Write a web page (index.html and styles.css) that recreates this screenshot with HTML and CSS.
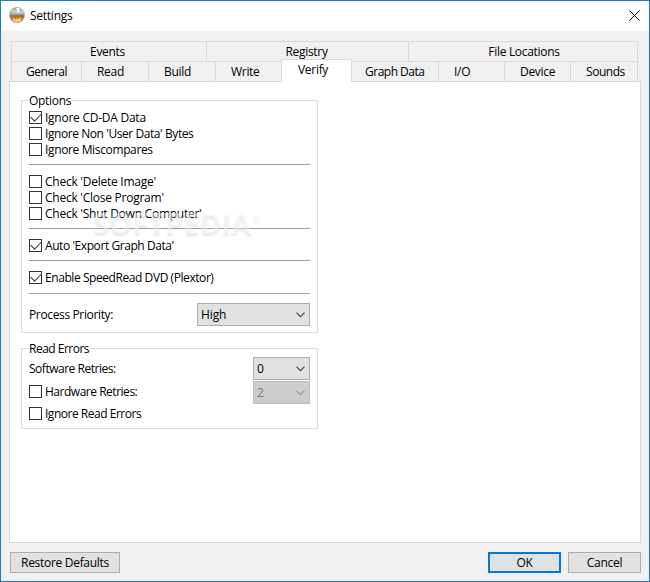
FILE: index.html
```html
<!DOCTYPE html>
<html lang="en">
<head>
<meta charset="utf-8">
<title>Settings</title>
<link rel="stylesheet" href="styles.css">
</head>
<body>
<div class="window">
  <header class="titlebar">
    <svg class="app-icon" width="16" height="16" viewBox="0 0 16 16">
      <defs>
        <linearGradient id="disc" x1="0" y1="0" x2="0" y2="1">
          <stop offset="0" stop-color="#98989c"/><stop offset=".3" stop-color="#d4d4d6"/><stop offset=".52" stop-color="#8f8986"/><stop offset=".72" stop-color="#a9764a"/><stop offset="1" stop-color="#e0a050"/>
        </linearGradient>
      </defs>
      <circle cx="8" cy="8" r="7.7" fill="url(#disc)" stroke="#b9aeaa" stroke-width=".5"/>
      <path d="M7 1h4L9 7z" fill="#f4f4f5"/>
      <path d="M1 8l3 1 3-1 2 1 3-1 3 1v1l-2 1-2-2-2 2-2-2-2 2-2-2-1 1z" fill="#77706d"/>
      <path d="M1.500 11l1-1 1 1 1-2 1 3 2-2 1 1 2-2 1 2 1-1 1 1 1-1c-1 3-4 5-6 5s-5-1-6-4z" fill="#e58a1a"/>
      <path d="M4 13l1-2 1 2 2-1 1 1 2-2 1 2c-2 2-6 2-8 0z" fill="#ffdf7a"/>
      <path d="M1 4h2v2H1z" fill="#8be02c"/>
    </svg>
    <h1>Settings</h1>
    <svg class="close" width="11" height="11" viewBox="0 0 11 11"><path d="M.5.5l10 10M10.5.5l-10 10" stroke="#000" fill="none"/></svg>
  </header>
  <main>
    <nav>
      <div class="tabs top">
        <span class="events">Events</span><span class="registry">Registry</span><span class="locations">File Locations</span>
      </div>
      <div class="tabs bottom">
        <span class="general">General</span><span>Read</span><span>Build</span><span class="write">Write</span><span class="active">Verify</span><span class="graph">Graph Data</span><span class="io">I/O</span><span class="device">Device</span><span class="sounds">Sounds</span>
      </div>
    </nav>
    <section class="panel">
      <fieldset class="options">
        <legend>Options</legend>
        <div class="row"><i class="box checked"></i><span class="wide-text">Ignore CD-DA Data</span></div>
        <div class="row"><i class="box"></i><span>Ignore Non 'User Data' Bytes</span></div>
        <div class="row"><i class="box"></i><span class="mid-text">Ignore Miscompares</span></div>
        <hr>
        <div class="row"><i class="box"></i><span class="wide-text">Check 'Delete Image'</span></div>
        <div class="row"><i class="box"></i><span class="wide-text">Check 'Close Program'</span></div>
        <div class="row"><i class="box"></i><span class="wide-text">Check 'Shut Down Computer'</span></div>
        <hr>
        <div class="row"><i class="box checked"></i><span>Auto 'Export Graph Data'</span></div>
        <hr>
        <div class="row"><i class="box checked"></i><span>Enable SpeedRead DVD (Plextor)</span></div>
        <hr class="last">
        <div class="field"><span class="mid-text">Process Priority:</span><div class="select wide">High<svg width="9" height="6" viewBox="0 0 9 6"><path d="M.5.7l4 4 4-4"/></svg></div></div>
        <div class="watermark">SOFTPEDIA<sup>®</sup></div>
      </fieldset>
      <fieldset class="errors">
        <legend>Read Errors</legend>
        <div class="field"><span>Software Retries:</span><div class="select">0<svg width="9" height="6" viewBox="0 0 9 6"><path d="M.5.7l4 4 4-4"/></svg></div></div>
        <div class="field hardware"><div class="row"><i class="box"></i><span>Hardware Retries:</span></div><div class="select disabled">2<svg width="9" height="6" viewBox="0 0 9 6"><path d="M.5.7l4 4 4-4"/></svg></div></div>
        <div class="row ignore"><i class="box"></i><span>Ignore Read Errors</span></div>
      </fieldset>
    </section>
  </main>
  <footer>
    <button class="restore">Restore Defaults</button>
    <button class="ok">OK</button>
    <button>Cancel</button>
  </footer>
</div>
</body>
</html>
```
FILE: styles.css
```css
* { box-sizing: border-box; }
body { margin: 0; }
body, button { font: 12px/16px "Open Sans", "Noto Sans", sans-serif; letter-spacing: -0.3px; color: #000; }
.window { width: 650px; height: 582px; border: 1px solid #1979ca; background: #f0f0f0; display: flex; flex-direction: column; }
.titlebar { height: 30px; flex: none; background: #fff; display: flex; align-items: center; padding: 0 9px 2px 8px; }
.app-icon { margin-right: 5px; }
h1 { font: inherit; letter-spacing: -0.25px; margin: 2px auto 0 0; }
main { padding: 10px 8px 0; height: 512px; flex: none; display: flex; flex-direction: column; }
nav { margin: 0 3px 0 2px; }
.tabs { display: flex; height: 20px; border-left: 1px solid #d9d9d9; }
.tabs span { border-top: 1px solid #d9d9d9; border-right: 1px solid #d9d9d9; line-height: 20px; }
.top span { text-align: center; }
.events { width: 195px; padding-right: 3px; }
.registry { width: 202px; padding-right: 2px; }
.locations { flex: 1; padding-left: 2px; }
.bottom span { width: 67px; padding-left: 15px; }
.bottom .general { width: 70px; padding-left: 14px; letter-spacing: -0.45px; }
.bottom .write { width: 65px; border-right: 0; }
.bottom .active { width: 71px; height: 23px; margin-top: -2px; background: #fff; border-left: 1px solid #d9d9d9; padding-left: 16px; position: relative; }
.bottom .graph { width: 87px; padding-left: 13px; letter-spacing: -0.5px; }
.bottom .io, .bottom .device { width: 66px; }
.bottom .sounds { flex: 1; letter-spacing: -0.45px; }
.panel { flex: 1; background: #fff; border: 1px solid #d9d9d9; padding: 10px 11px; }
fieldset { width: 297px; margin: 0; border: 1px solid #dcdcdc; padding: 0 7px; min-width: 0; }
legend { padding: 0; height: 16px; line-height: 18px; }
.errors legend { letter-spacing: -0.5px; }
.options { height: 241px; padding-top: 2px; position: relative; }
.errors { height: 89px; margin-top: 7px; padding-top: 1px; }
.row, .field { letter-spacing: -0.43px; }
.errors .row, .errors .field { letter-spacing: -0.48px; }
.row { display: flex; height: 16px; white-space: nowrap; }
.row .wide-text { letter-spacing: -0.25px; }
.mid-text { letter-spacing: -0.36px; }
.box { width: 13px; height: 13px; border: 1px solid #333; margin: 1px 3px 0 0; background: #fff; flex: none; }
.checked::after { content: ""; display: block; width: 9px; height: 5px; margin: 2px 0 0 1px; border-left: 1px solid #333; border-bottom: 1px solid #333; transform: translateY(-1px) rotate(-45deg); }
hr { border: 0; height: 1px; background: #a0a0a0; margin: 6px 0 9px; }
.last { margin: 7px 0 9px; }
.field { display: flex; justify-content: space-between; height: 23px; line-height: 23px; }
.select { width: 57px; height: 23px; border: 1px solid #adadad; background: #e1e1e1; display: flex; justify-content: space-between; align-items: center; padding: 0 4px 0 3px; letter-spacing: -0.1px; }
.wide { width: 113px; }
.select path { fill: none; stroke: #444; stroke-width: 1.2; }
.disabled { background: #ccc; border-color: #bfbfbf; color: #777; }
.disabled path { stroke: #999; }
.hardware { margin-top: 1px; }
.hardware .row { margin-top: 3px; line-height: 16px; }
.ignore { margin-top: 2px; }
.watermark { position: absolute; left: 71px; top: 99px; font: bold 29px/32px "Open Sans", sans-serif; letter-spacing: .1px; color: rgba(255,255,255,.5); text-shadow: 0 2px 2px rgba(0,0,0,.1); white-space: nowrap; }
.watermark sup { font-size: 11px; line-height: 0; vertical-align: 12px; }
footer { display: flex; padding: 9px 8px 0 9px; }
button { width: 73px; height: 21px; border: 1px solid #adadad; background: #e1e1e1; padding: 0; }
.restore { width: 110px; margin-right: auto; }
.ok { border: 2px solid #0078d7; margin-right: 7px; }
```
